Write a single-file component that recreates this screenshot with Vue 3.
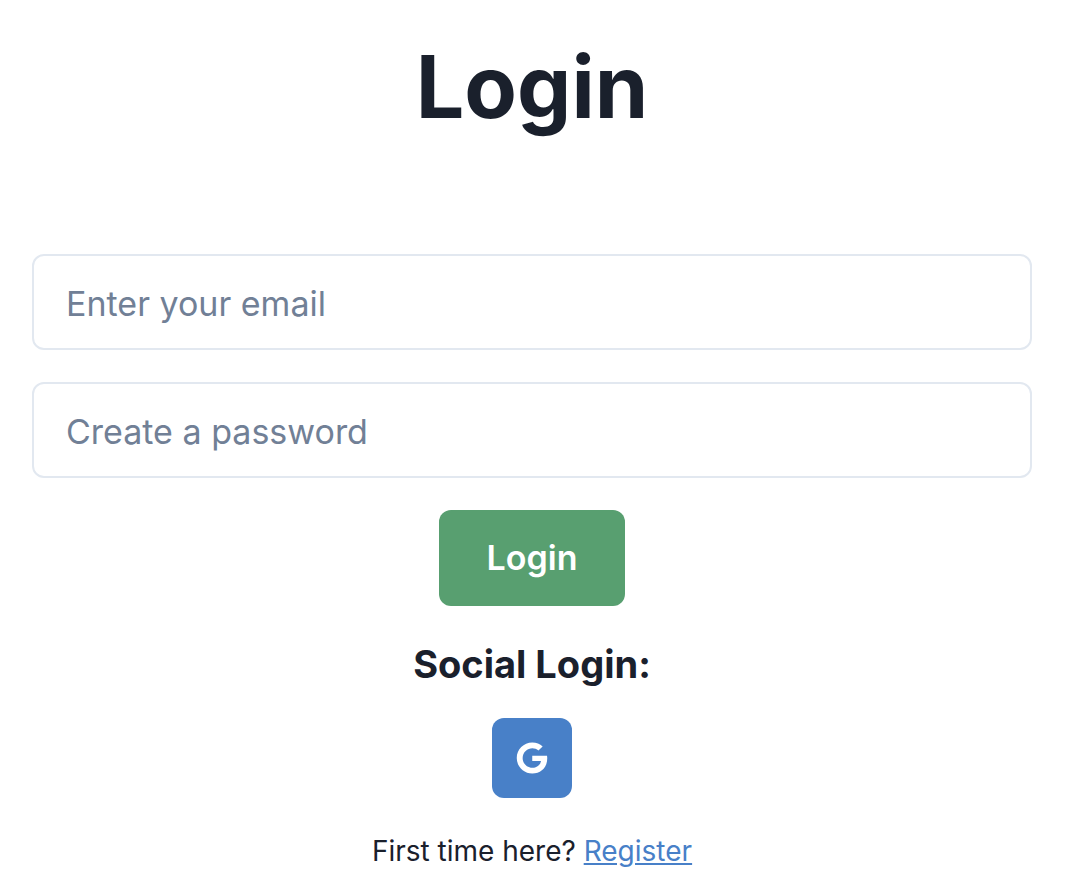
<script setup>
import { ref } from 'vue'

const email = ref('')
const password = ref('')
</script>

<template>
  <main class="page">
    <h1 class="title">Login</h1>
    <form class="form" @submit.prevent>
      <input v-model="email" class="field" type="email" aria-label="Enter your email" placeholder="Enter your email" />
      <input v-model="password" class="field" type="password" aria-label="Create a password" placeholder="Create a password" />
      <button class="submit" type="submit">Login</button>
    </form>
    <h2 class="subtitle">Social Login:</h2>
    <button class="social" type="button" aria-label="Google">
      <svg class="icon" viewBox="0 0 488 512" aria-hidden="true">
        <path fill="#fff" d="M488 261.8C488 403.3 391.1 504 248 504 110.8 504 0 393.2 0 256S110.8 8 248 8c66.8 0 123 24.5 166.3 64.9l-67.5 64.9C258.5 52.6 94.3 116.6 94.3 256c0 86.5 69.1 156.6 153.7 156.6 98.2 0 135-70.4 140.8-106.9H248v-85.3h236.1c2.3 12.7 3.9 24.9 3.9 41.4z" />
      </svg>
    </button>
    <p class="note">First time here? <a class="link" href="#">Register</a></p>
  </main>
</template>

<style>
body {
  margin: 0;
  background: #fff;
}
</style>

<style scoped>
.page {
  display: flex;
  flex-direction: column;
  align-items: center;
  padding: 39px 36px 0 32px;
  color: #1a202c;
  font-family: Inter, "Liberation Sans", sans-serif;
}
.title {
  margin: 0;
  font-size: 86px;
  line-height: 96px;
  font-weight: 700;
}
.form {
  align-self: stretch;
  display: flex;
  flex-direction: column;
  align-items: center;
  gap: 32px;
  margin-top: 119px;
}
.field {
  box-sizing: border-box;
  width: 100%;
  height: 96px;
  padding: 2px 32px 0;
  border: 2px solid #e2e8f0;
  border-radius: 12px;
  background: #fff;
  color: inherit;
  font: 400 34px/48px Inter, "Liberation Sans", sans-serif;
}
.field::placeholder {
  color: #718096;
  opacity: 1;
}
.submit {
  height: 96px;
  padding: 0 48px;
  border: 0;
  border-radius: 12px;
  background: #589f70;
  color: #fff;
  font: 600 34px/48px Inter, "Liberation Sans", sans-serif;
}
.subtitle {
  margin: 32px 0 0;
  font-size: 38px;
  line-height: 52px;
  font-weight: 700;
}
.social {
  display: flex;
  align-items: center;
  justify-content: center;
  width: 80px;
  height: 80px;
  margin-top: 28px;
  padding: 0;
  border: 0;
  border-radius: 12px;
  background: #4880c8;
}
.icon {
  width: 32px;
  height: 32px;
}
.note {
  margin: 32px 0 0;
  font-size: 28px;
  line-height: 42px;
}
.link {
  color: #4880c8;
}
</style>
